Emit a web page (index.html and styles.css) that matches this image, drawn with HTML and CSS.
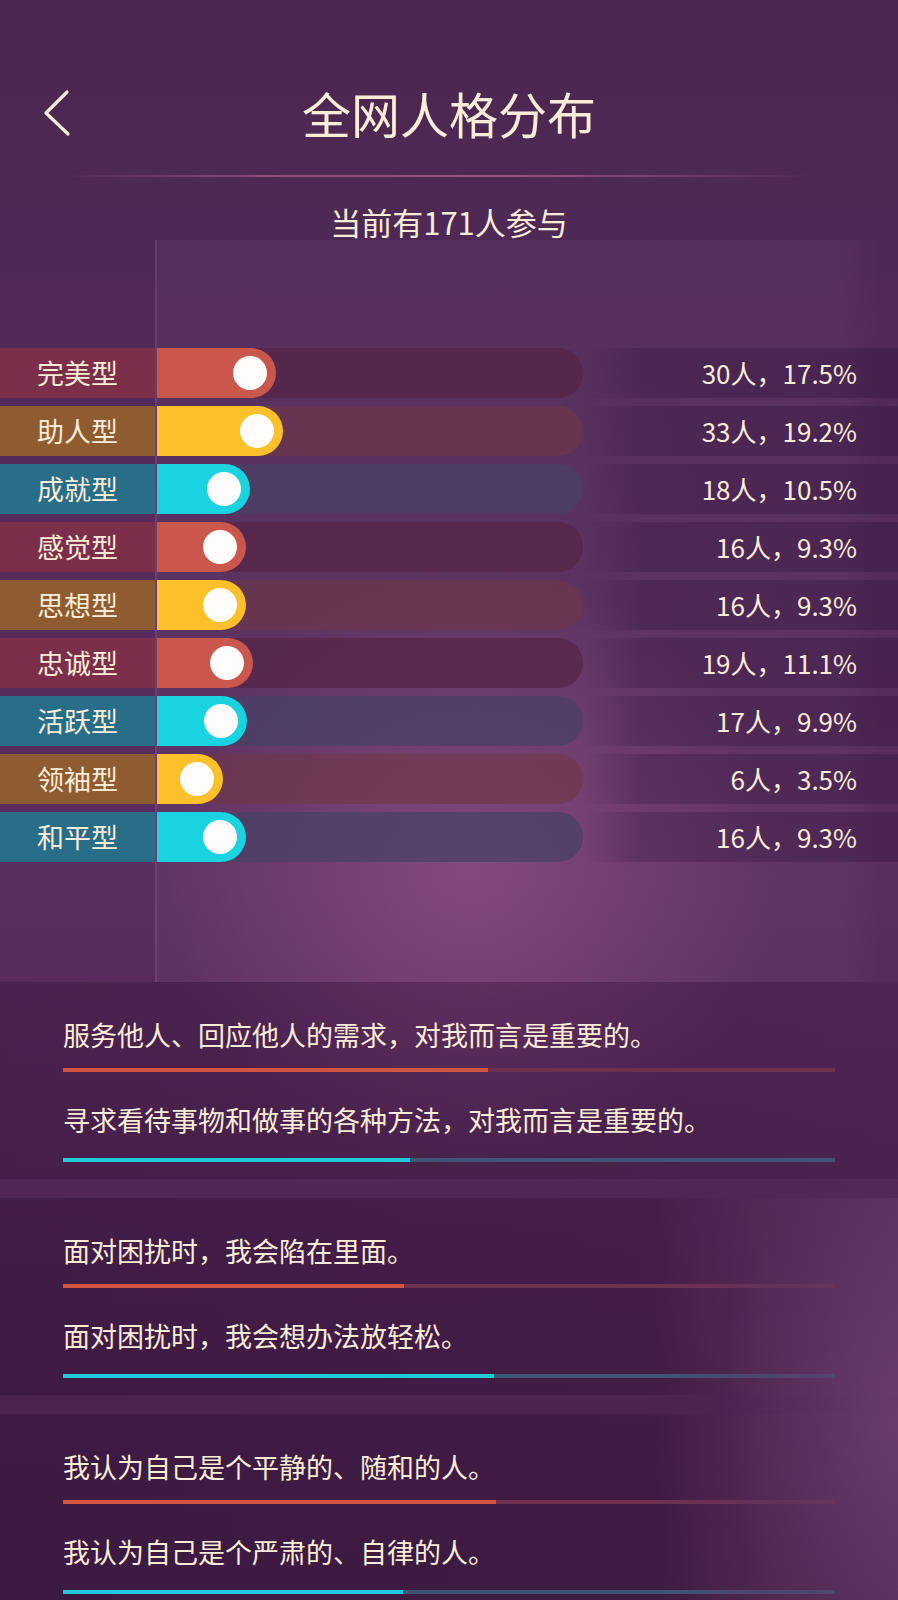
FILE: index.html
```html
<!DOCTYPE html>
<html lang="zh-CN">
<head>
<meta charset="utf-8">
<title>全网人格分布</title>
<link rel="stylesheet" href="styles.css">
</head>
<body>
<div class="page">
  <header class="header">
    <div class="back">
      <svg width="30" height="48" viewBox="0 0 30 48" aria-hidden="true"><polyline points="24,3 3,24 25,45" fill="none" stroke="#fbecd8" stroke-width="3.2" stroke-linecap="round" stroke-linejoin="round"/></svg>
    </div>
    <h1 class="title">全网人格分布</h1>
    <div class="spacer"></div>
  </header>
  <div class="divider"></div>
  <p class="subtitle">当前有171人参与</p>

  <section class="chart">
    <div class="row red"><div class="label">完美型</div><div class="track"><div class="fill" style="width:119px"><span class="knob"></span></div></div><div class="value">30人，17.5%</div></div>
    <div class="row yellow"><div class="label">助人型</div><div class="track"><div class="fill" style="width:126px"><span class="knob"></span></div></div><div class="value">33人，19.2%</div></div>
    <div class="row cyan"><div class="label">成就型</div><div class="track"><div class="fill" style="width:93px"><span class="knob"></span></div></div><div class="value">18人，10.5%</div></div>
    <div class="row red"><div class="label">感觉型</div><div class="track"><div class="fill" style="width:89px"><span class="knob"></span></div></div><div class="value">16人，9.3%</div></div>
    <div class="row yellow"><div class="label">思想型</div><div class="track"><div class="fill" style="width:89px"><span class="knob"></span></div></div><div class="value">16人，9.3%</div></div>
    <div class="row red"><div class="label">忠诚型</div><div class="track"><div class="fill" style="width:96px"><span class="knob"></span></div></div><div class="value">19人，11.1%</div></div>
    <div class="row cyan"><div class="label">活跃型</div><div class="track"><div class="fill" style="width:90px"><span class="knob"></span></div></div><div class="value">17人，9.9%</div></div>
    <div class="row yellow"><div class="label">领袖型</div><div class="track"><div class="fill" style="width:66px"><span class="knob"></span></div></div><div class="value">6人，3.5%</div></div>
    <div class="row cyan"><div class="label">和平型</div><div class="track"><div class="fill" style="width:89px"><span class="knob"></span></div></div><div class="value">16人，9.3%</div></div>
  </section>

  <section class="cards">
    <div class="card">
      <p class="stmt">服务他人、回应他人的需求，对我而言是重要的。</p>
      <div class="line red"><div class="line-fill" style="width:425px"></div></div>
      <p class="stmt">寻求看待事物和做事的各种方法，对我而言是重要的。</p>
      <div class="line cyan"><div class="line-fill" style="width:347px"></div></div>
    </div>
    <div class="card fade">
      <p class="stmt">面对困扰时，我会陷在里面。</p>
      <div class="line red"><div class="line-fill" style="width:341px"></div></div>
      <p class="stmt">面对困扰时，我会想办法放轻松。</p>
      <div class="line cyan"><div class="line-fill" style="width:431px"></div></div>
    </div>
    <div class="card fade">
      <p class="stmt">我认为自己是个平静的、随和的人。</p>
      <div class="line red"><div class="line-fill" style="width:433px"></div></div>
      <p class="stmt">我认为自己是个严肃的、自律的人。</p>
      <div class="line cyan"><div class="line-fill" style="width:340px"></div></div>
    </div>
  </section>
</div>
</body>
</html>
```
FILE: styles.css
```css
html, body {
  margin: 0;
  padding: 0;
}
body {
  width: 898px;
  min-height: 1600px;
  overflow: hidden;
  font-family: "Noto Sans CJK SC", "Noto Sans", sans-serif;
  color: #fbecd8;
  background:
    radial-gradient(ellipse 430px 420px at 470px 870px, rgba(160, 85, 140, 0.55), rgba(160, 85, 140, 0) 72%),
    radial-gradient(ellipse 240px 340px at 898px 1420px, rgba(150, 95, 150, 0.4), rgba(150, 95, 150, 0) 75%),
    linear-gradient(180deg, #4a284f 0%, #522a59 25%, #5a2e5f 55%, #4e2553 78%, #45214a 100%);
}
.page {
  width: 898px;
  height: 1600px;
  overflow: hidden;
}

/* header */
.header {
  display: grid;
  grid-template-columns: 150px 1fr 150px;
  align-items: center;
  padding-top: 83px;
  height: 59px;
}
.back {
  padding-left: 43px;
  height: 48px;
  display: flex;
  align-items: center;
}
.back svg { display: block; }
.title {
  margin: 0;
  font-size: 49px;
  line-height: 59px;
  font-weight: 400;
  text-align: center;
}
.divider {
  margin: 33px 0 0 61px;
  width: 756px;
  height: 2px;
  background: linear-gradient(90deg, rgba(220, 120, 170, 0) 0%, rgba(210, 120, 165, 0.5) 30%, rgba(210, 120, 165, 0.55) 60%, rgba(220, 120, 170, 0) 100%);
}
.subtitle {
  margin: 27px 0 0;
  font-size: 31px;
  line-height: 36px;
  text-align: center;
}

/* chart */
.chart {
  padding: 108px 0 120px;
  display: flex;
  flex-direction: column;
  gap: 8px;
  background:
    linear-gradient(90deg,
      rgba(0, 0, 0, 0) 0,
      rgba(0, 0, 0, 0) 155px,
      rgba(255, 220, 255, 0.12) 155px,
      rgba(255, 220, 255, 0.12) 157px,
      rgba(255, 230, 255, 0.035) 157px,
      rgba(255, 230, 255, 0.035) 840px,
      rgba(255, 230, 255, 0) 880px);
}
.row {
  display: flex;
  height: 50px;
}
.label {
  width: 155px;
  flex: none;
  margin-right: 2px;
  font-size: 27px;
  line-height: 50px;
  text-align: center;
}
.track {
  width: 426px;
  flex: none;
  height: 50px;
  border-radius: 0 25px 25px 0;
  overflow: hidden;
}
.fill {
  height: 50px;
  border-radius: 0 25px 25px 0;
  display: flex;
  justify-content: flex-end;
  align-items: center;
  padding-right: 9px;
  box-sizing: border-box;
}
.knob {
  width: 34px;
  height: 34px;
  border-radius: 50%;
  background: #fffdfb;
}
.value {
  flex: 1;
  text-align: right;
  padding-right: 41px;
  font-size: 26px;
  line-height: 50px;
  background: linear-gradient(90deg, rgba(40, 12, 50, 0) 0, rgba(40, 12, 50, 0.25) 60px, rgba(40, 12, 50, 0.3) 100%);
}

.row.red .label { background: #7c2f4a; }
.row.red .track { background: rgba(85, 35, 70, 0.7); }
.row.red .fill { background: #c9574c; }

.row.yellow .label { background: #8e5c30; }
.row.yellow .track { background: rgba(110, 55, 70, 0.65); }
.row.yellow .fill { background: #fcc12a; }

.row.cyan .label { background: #286e89; }
.row.cyan .track { background: rgba(70, 65, 100, 0.72); }
.row.cyan .fill { background: #19d3e0; }

/* cards */
.cards {
  display: flex;
  flex-direction: column;
  gap: 19px;
}
.card {
  position: relative;
  padding: 36px 63px 17px;
  background: linear-gradient(90deg, rgba(45, 14, 50, 0.32) 0%, rgba(45, 14, 50, 0.26) 60%, rgba(45, 14, 50, 0.2) 100%);
}
.card.fade {
  background: linear-gradient(90deg, rgba(45, 14, 50, 0.4) 0%, rgba(45, 14, 50, 0.32) 72%, rgba(45, 14, 50, 0.08) 92%, rgba(45, 14, 50, 0) 100%);
}
.card.fade::after {
  content: "";
  position: absolute;
  top: 0;
  right: 0;
  bottom: 0;
  width: 240px;
  background: linear-gradient(90deg, rgba(95, 50, 95, 0) 0%, rgba(95, 50, 95, 0.45) 45%, rgba(105, 60, 110, 0.5) 100%);
  pointer-events: none;
}
.stmt {
  margin: 0;
  font-size: 27px;
  line-height: 34px;
  white-space: nowrap;
}
.line {
  height: 4px;
  margin: 16px 0 31px;
}
.line:last-child {
  margin-bottom: 0;
  margin-top: 21px;
}
.line-fill {
  height: 4px;
}
.line.red { background: #6e3150; }
.line.red .line-fill { background: #d25540; }
.line.cyan { background: #3d5676; }
.line.cyan .line-fill { background: #1fc9da; }
```
